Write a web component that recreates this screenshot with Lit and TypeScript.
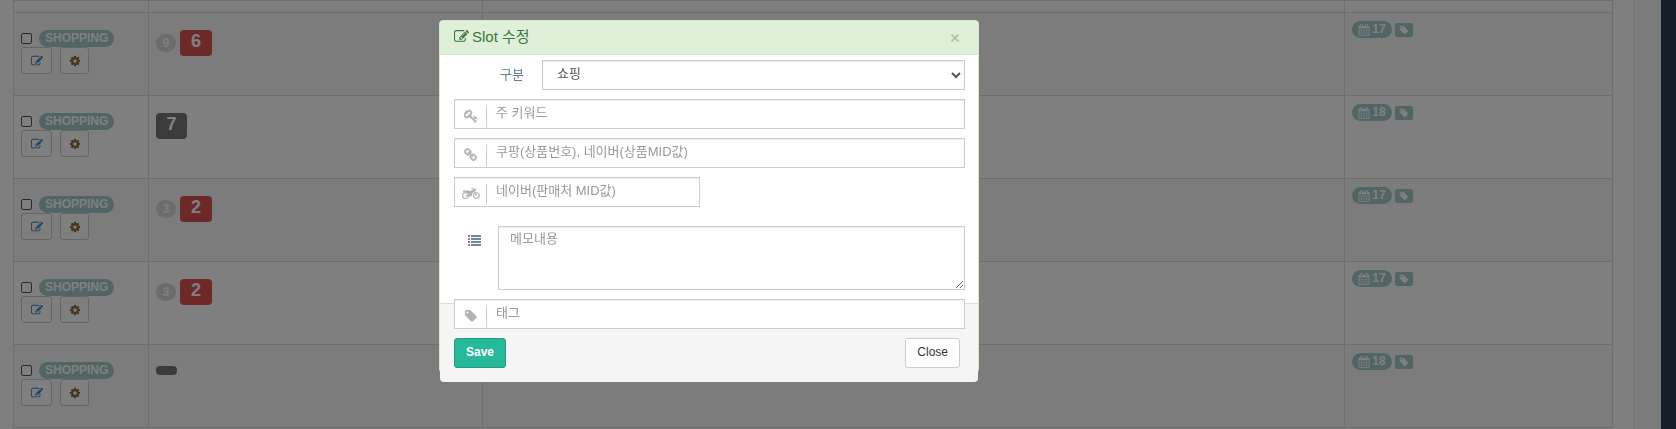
import { LitElement, html, css, svg, nothing } from "lit";
import { customElement, property } from "lit/decorators.js";

const ICONS: Record<string, unknown> = {
  edit: svg`<path d="M888 1184l116-116-152-152-116 116v56h96v96h56zm440-720q-16-16-33 1l-350 350q-17 17-1 33t33-1l350-350q17-17 1-33zm80 594v190q0 119-84.5 203.5t-203.5 84.5h-832q-119 0-203.500-84.500t-84.500-203.500v-832q0-119 84.500-203.500t203.500-84.500h832q63 0 117 25 15 7 18 23 3 17-9 29l-49 49q-14 14-32 8-23-6-45-6h-832q-66 0-113 47t-47 113v832q0 66 47 113t113 47h832q66 0 113-47t47-113v-126q0-13 9-22l64-64q15-15 35-7t20 29zm-96-738l288 288-672 672h-288v-288zm444 132l-92 92-288-288 92-92q28-28 68-28t68 28l152 152q28 28 28 68t-28 68z"/>`,
  cog: svg`<path d="M1152 896q0-106-75-181t-181-75-181 75-75 181 75 181 181 75 181-75 75-181zm512-109v222q0 12-8 23t-20 13l-185 28q-19 54-39 91 35 50 107 138 10 12 10 25t-9 23q-27 37-99 108t-94 71q-12 0-26-9l-138-108q-44 23-91 38-16 136-29 186-7 28-36 28h-222q-14 0-24.500-8.500t-11.500-21.500l-28-184q-49-16-90-37l-141 107q-10 9-25 9-14 0-25-11-126-114-165-168-7-10-7-23 0-12 8-23 15-21 51-66.500t54-70.500q-27-50-41-99l-183-27q-13-2-21-12.500t-8-23.500v-222q0-12 8-23t19-13l186-28q14-46 39-92-40-57-107-138-10-12-10-24 0-10 9-23 26-36 98.500-107.500t94.500-71.500q13 0 26 10l138 107q44-23 91-38 16-136 29-186 7-28 36-28h222q14 0 24.500 8.500t11.500 21.500l28 184q49 16 90 37l142-107q9-9 24-9 13 0 25 10 129 119 165 170 7 8 7 22 0 12-8 23-15 21-51 66.500t-54 70.500q26 50 41 98l183 28q13 2 21 12.500t8 23.500z"/>`,
  tag: svg`<path d="M576 448q0-53-37.500-90.500t-90.500-37.500-90.500 37.500-37.500 90.500 37.500 90.500 90.500 37.500 90.500-37.500 37.500-90.500zm1067 576q0 53-37 90l-491 492q-39 37-91 37-53 0-90-37l-715-716q-38-37-64.500-101t-26.500-117v-416q0-52 38-90t90-38h416q53 0 117 26.500t102 64.500l715 714q37 39 37 91z"/>`,
  calendar: svg`<path d="M192 1664h288v-288h-288v288zm352 0h320v-288h-320v288zm-352-352h288v-320h-288v320zm352 0h320v-320h-320v320zm-352-384h288v-288h-288v288zm736 736h320v-288h-320v288zm-384-736h320v-288h-320v288zm768 736h288v-288h-288v288zm-384-352h320v-320h-320v320zm-352-864v-288q0-13-9.500-22.500t-22.500-9.500h-64q-13 0-22.500 9.500t-9.500 22.500v288q0 13 9.500 22.500t22.500 9.500h64q13 0 22.500-9.500t9.500-22.500zm736 864h288v-320h-288v320zm-384-384h320v-288h-320v288zm384 0h288v-288h-288v288zm32-480v-288q0-13-9.500-22.500t-22.500-9.500h-64q-13 0-22.500 9.500t-9.500 22.500v288q0 13 9.500 22.500t22.500 9.500h64q13 0 22.500-9.500t9.500-22.500zm384-64v1280q0 52-38 90t-90 38h-1408q-52 0-90-38t-38-90v-1280q0-52 38-90t90-38h128v-96q0-66 47-113t113-47h64q66 0 113 47t47 113v96h384v-96q0-66 47-113t113-47h64q66 0 113 47t47 113v96h128q52 0 90 38t38 90z"/>`,
  key: svg`<path d="M832 512q0-80-56-136t-136-56-136 56-56 136q0 42 19 83-41-19-83-19-80 0-136 56t-56 136 56 136 136 56 136-56 56-136q0-42-19-83 41 19 83 19 80 0 136-56t56-136zm851 704q0 17-49 66t-66 49q-9 0-28.500-16t-36.500-33-38.500-40-24.500-26l-96 96 220 220q28 28 28 68 0 42-39 81t-81 39q-40 0-68-28l-671-671q-176 131-365 131-163 0-265.500-102.500t-102.500-265.500q0-160 95-313t248-248 313-95q163 0 265.500 102.500t102.500 265.500q0 189-131 365l355 355 96-96q-3-3-26-24.500t-40-38.500-33-36.500-16-28.500q0-17 49-66t66-49q13 0 23 10 6 6 46 44.500t82 79.500 86.500 86 73 78 28.500 41z" stroke="currentColor" stroke-width="60"/>`,
  link: svg`<path d="M1456 1216q0-40-28-68l-208-208q-28-28-68-28-42 0-72 32 3 3 19 18.500t21.500 21.500 15 19 13 25.500 3.500 27.500q0 40-28 68t-68 28q-15 0-27.500-3.500t-25.500-13-19-15-21.500-21.500-18.500-19q-33 31-33 73 0 40 28 68l206 207q27 27 68 27 40 0 68-26l147-146q28-28 28-67zm-703-705q0-40-28-68l-206-207q-28-28-68-28-39 0-68 27l-147 146q-28 28-28 67 0 40 28 68l208 208q27 27 68 27 42 0 72-31-3-3-19-18.500t-21.500-21.500-15-19-13-25.500-3.500-27.500q0-40 28-68t68-28q15 0 27.500 3.500t25.500 13 19 15 21.500 21.500 18.500 19q33-31 33-73zm895 705q0 120-85 203l-147 146q-83 83-203 83-121 0-204-85l-206-207q-83-83-83-203 0-123 88-209l-88-88q-86 88-208 88-120 0-204-84l-208-208q-84-84-84-204t85-203l147-146q83-83 203-83 121 0 204 85l206 207q83 83 83 203 0 123-88 209l88 88q86-88 208-88 120 0 204 84l208 208q84 84 84 204z" stroke="currentColor" stroke-width="60"/>`,
  list: svg`<path d="M0 138h276v276H0zM414 138h1378v276H414zM0 551h276v276H0zM414 551h1378v276H414zM0 965h276v276H0zM414 965h1378v276H414zM0 1378h276v276H0zM414 1378h1378v276H414z"/>`,
  motorcycle: svg`<g><circle cx="450" cy="1100" r="370" fill="none" stroke="currentColor" stroke-width="140"/><circle cx="1850" cy="1100" r="370" fill="none" stroke="currentColor" stroke-width="140"/><path d="M150 440h460q130-60 290 0l180 70q130-140 330-140l-60-110h-190v-130h270l100 150 150-90h140v290h-220l310 560-120 80-310-520q-190 190-200 500l-100 110H900q-20-380-260-480-230-70-450 30l90-110q-60-70-180-70zM450 1030h520v140H450z"/></g>`,
};

@customElement("fa-icon")
class FaIcon extends LitElement {
  @property() name = "";
  static styles = css`
    :host { display: inline-flex; flex: none; }
    svg { display: block; height: 1em; fill: currentColor; }
  `;
  render() {
    const width = this.name === "motorcycle" ? 2304 : 1792;
    return html`<svg viewBox="0 0 ${width} 1792" aria-hidden="true">${ICONS[this.name]}</svg>`;
  }
}

interface Slot {
  previous?: string;
  rank?: string;
  up: boolean;
  day: string;
}

const SLOTS: Slot[] = [
  { previous: "9", rank: "6", up: true, day: "17" },
  { rank: "7", up: false, day: "18" },
  { previous: "3", rank: "2", up: true, day: "17" },
  { previous: "3", rank: "2", up: true, day: "17" },
  { up: false, day: "18" },
];

@customElement("slot-table")
class SlotTable extends LitElement {
  static styles = css`
    :host { display: block; }
    * { box-sizing: border-box; }
    .table { width: 100%; border-collapse: collapse; table-layout: fixed; }
    .table td { height: 83px; padding: 0 7px; border: 1px solid #ddd; vertical-align: top; }
    .table .lead td { height: 12px; }
    .table .slot:nth-child(even) td { background: #f9f9f9; }
    .kind { width: 135px; }
    .rank { width: 334px; }
    .date { width: 268px; }
    .line { display: flex; align-items: center; }
    .type { gap: 7px; padding-top: 17px; }
    .check { width: 11px; height: 11px; margin: 0; appearance: none; border: 1px solid #555; border-radius: 2px; background: #fff; }
    .pill { display: inline-flex; align-items: center; justify-content: center; height: 17px; border-radius: 9px; background: #a2cbc8; color: #fff; font-size: 12px; font-weight: 700; line-height: 17px; }
    .shopping { padding: 0 6px; }
    .tools { gap: 8px; }
    .tool { display: flex; align-items: center; justify-content: center; width: 31px; height: 27px; padding: 0; border: 1px solid #ccc; border-radius: 3px; background: #fff; color: #337ab7; font-size: 12px; }
    .cog { width: 29px; color: #8a6d3b; }
    .ranks { gap: 4px; padding-top: 17px; }
    .previous { width: 20px; height: 18px; background: #d9d9d9; color: #fff; }
    .current { display: flex; justify-content: center; min-width: 31px; height: 26px; border-radius: 4px; background: #777; color: #fff; font-size: 18px; font-weight: 700; line-height: 22px; }
    .up { min-width: 32px; background: #d9534f; }
    .none { width: 21px; min-width: 0; height: 9px; margin-top: 4px; }
    .dates { gap: 3px; padding-top: 8px; }
    .day { width: 40px; gap: 2px; }
    .tag { display: flex; align-items: center; justify-content: center; width: 18px; height: 14px; border-radius: 2px; background: #a2cbc8; color: #fff; font-size: 10px; }
  `;
  render() {
    return html`<table class="table">
      <colgroup><col class="kind" /><col class="rank" /><col /><col class="date" /></colgroup>
      <tbody>
        <tr class="lead"><td></td><td></td><td></td><td></td></tr>
        ${SLOTS.map((s) => html`<tr class="slot">
          <td>
            <div class="line type">
              <input class="check" type="checkbox" aria-label="SHOPPING" />
              <span class="pill shopping">SHOPPING</span>
            </div>
            <div class="line tools">
              <button class="tool" aria-label="Edit"><fa-icon name="edit"></fa-icon></button>
              <button class="tool cog" aria-label="Settings"><fa-icon name="cog"></fa-icon></button>
            </div>
          </td>
          <td>
            <div class="line ranks">
              ${s.previous ? html`<span class="pill previous">${s.previous}</span>` : nothing}
              <span class="current ${s.up ? "up" : ""} ${s.rank ? "" : "none"}">${s.rank ?? nothing}</span>
            </div>
          </td>
          <td></td>
          <td>
            <div class="line dates">
              <span class="pill day"><fa-icon name="calendar"></fa-icon>${s.day}</span>
              <span class="tag"><fa-icon name="tag"></fa-icon></span>
            </div>
          </td>
        </tr>`)}
      </tbody>
    </table>`;
  }
}

@customElement("slot-dialog")
class SlotDialog extends LitElement {
  static styles = css`
    :host { display: block; }
    * { box-sizing: border-box; }
    .panel { border: 1px solid #d6e9c6; border-radius: 4px; background: #fff; }
    .head { display: flex; align-items: center; justify-content: space-between; height: 34px; padding: 0 15px 0 14px; border-bottom: 1px solid #d6e9c6; border-radius: 3px 3px 0 0; background: #dff0d8; color: #3c763d; }
    .title { display: flex; align-items: center; gap: 3px; margin: 0; padding-bottom: 2px; font-size: 15px; font-weight: 400; line-height: 20px; }
    .x { display: flex; padding: 4px; border: 0; background: none; color: #b1c0ab; }
    .x svg { width: 8px; height: 8px; }
    .form { position: relative; z-index: 1; display: flex; flex-direction: column; gap: 9px; padding: 5px 13px 0 14px; }
    .row { display: grid; grid-template-columns: 88px 1fr; }
    .label { padding-right: 18px; color: #5f7b99; font-size: 13px; line-height: 30px; text-align: right; }
    .control { width: 100%; border: 1px solid #ccc; border-radius: 0; background: #fff; box-shadow: inset 0 1px 1px rgba(0, 0, 0, 0.075); color: #555; font: inherit; font-size: 13px; line-height: 18px; }
    .control::placeholder { color: #999; opacity: 1; }
    .select { height: 30px; padding: 0 0 4px 10px; }
    .field { position: relative; display: flex; }
    .field .control { height: 30px; padding: 1px 8px 5px 41px; }
    .mark { position: absolute; inset: 7px auto 2px 0; display: flex; align-items: center; justify-content: center; width: 33px; padding: 0 0 2px 2px; border-right: 1px solid #ccc; color: #b3b3b3; font-size: 14px; }
    .half { width: 246px; }
    .memo { display: grid; grid-template-columns: 44px 1fr; padding-top: 10px; }
    .mark-label { padding: 8px 0 0 14px; color: #7187a3; font-size: 13px; }
    .area { display: block; height: 64px; padding: 3px 11px; resize: vertical; }
    .foot { display: flex; justify-content: space-between; margin: -26px 0 -10px; padding: 34px 18px 14px 14px; border-top: 1px solid #ddd; border-radius: 0 0 4px 4px; background: #f5f5f5; }
    .btn { height: 30px; padding: 0 11px 2px; border: 1px solid #ccc; border-radius: 3px; background: #fff; color: #333; font: inherit; font-size: 12px; line-height: 18px; }
    .save { border-color: #1e9c80; background: #26b99a; color: #fff; font-weight: 700; }
  `;
  private field(icon: string, text: string, half = false) {
    return html`<div class="field ${half ? "half" : ""}">
      <label class="mark" for=${icon}><fa-icon name=${icon}></fa-icon></label>
      <input class="control" id=${icon} type="text" placeholder=${text} aria-label=${text} />
    </div>`;
  }
  render() {
    return html`<section class="panel" role="dialog" aria-labelledby="title">
      <header class="head">
        <h4 class="title" id="title"><fa-icon name="edit"></fa-icon>Slot 수정</h4>
        <button class="x" aria-label="Close"><svg viewBox="0 0 8 8"><path d="M0.500 0.500L7.500 7.500M7.500 0.500L0.500 7.500" stroke="currentColor" stroke-width="1.800" /></svg></button>
      </header>
      <div class="form">
        <div class="row">
          <label class="label" for="kind">구분</label>
          <select class="control select" id="kind"><option>쇼핑</option></select>
        </div>
        ${this.field("key", "주 키워드")}
        ${this.field("link", "쿠팡(상품번호), 네이버(상품MID값)")}
        ${this.field("motorcycle", "네이버(판매처 MID값)", true)}
        <div class="memo">
          <label class="mark-label" for="memo"><fa-icon name="list"></fa-icon></label>
          <textarea class="control area" id="memo" placeholder="메모내용" aria-label="메모내용"></textarea>
        </div>
        ${this.field("tag", "태그")}
      </div>
      <footer class="foot">
        <button class="btn save">Save</button>
        <button class="btn">Close</button>
      </footer>
    </section>`;
  }
}

@customElement("app-root")
class AppRoot extends LitElement {
  static styles = css`
    :host { display: block; height: 100vh; overflow: hidden; font-family: "Liberation Sans", "Noto Sans CJK KR", sans-serif; }
    * { box-sizing: border-box; }
    .page { display: grid; grid-template-columns: 1fr 15px; height: 100%; background: #2a3f54; }
    .content { padding-right: 27px; overflow: hidden; background: #f7f7f7; }
    .card { min-height: 100%; padding: 0 20px 0 13px; border-right: 1px solid #e6e9ed; background: #fff; }
    .backdrop { position: fixed; inset: 0; padding: 20px 16px 0 439px; background: rgba(0, 0, 0, 0.5); }
    .dialog { max-width: 540px; }
  `;
  render() {
    return html`<main class="page">
        <div class="content"><div class="card"><slot-table></slot-table></div></div>
      </main>
      <div class="backdrop"><slot-dialog class="dialog"></slot-dialog></div>`;
  }
}
